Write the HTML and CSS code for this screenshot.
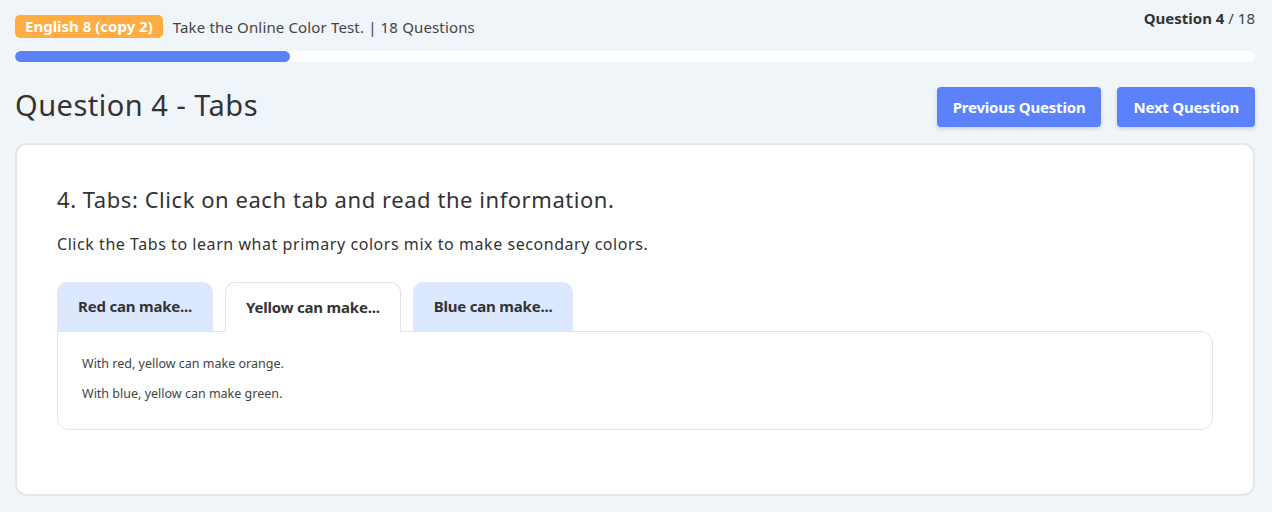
FILE: index.html
```html
<!DOCTYPE html>
<html lang="en">
<head>
  <meta charset="UTF-8" />
  <meta name="viewport" content="width=device-width, initial-scale=1.0" />
  <title>Question 4 - Tabs</title>
  <link rel="stylesheet" href="styles.css">
</head>
<body>
  <div class="page">

    <div class="top-bar">
      <div class="test-info">
        <span class="badge">English 8 (copy 2)</span>
        <span class="test-title">Take the Online Color Test. | 18 Questions</span>
      </div>
      <div class="counter"><b>Question 4</b> / 18</div>
    </div>

    <div class="progress">
      <div class="progress-fill" style="width: 22.2%;"></div>
    </div>

    <div class="question-head">
      <h1>Question 4 - Tabs</h1>
      <div class="nav-buttons">
        <button type="button">Previous Question</button>
        <button type="button">Next Question</button>
      </div>
    </div>

    <div class="card">
      <h2>4. Tabs: Click on each tab and read the information.</h2>
      <p class="intro">Click the Tabs to learn what primary colors mix to make secondary colors.</p>

      <ul class="tabs">
        <li>Red can make...</li>
        <li class="active">Yellow can make...</li>
        <li>Blue can make...</li>
      </ul>
      <div class="tab-panel">
        <p>With red, yellow can make orange.</p>
        <p>With blue, yellow can make green.</p>
      </div>
    </div>

  </div>
</body>
</html>
```

FILE: styles.css
```css
body {
  font-family: "Noto Sans", Lato, sans-serif;
  background: #f0f5fa;
  color: #333;
  margin: 0;
}
.page {
  padding: 12px 17px 16px 15px;
}
/* Top bar */
.top-bar {
  display: flex;
  justify-content: space-between;
  align-items: flex-start;
}
.test-info {
  display: flex;
  align-items: center;
  gap: 10px;
  margin-top: 3px;
}
.badge {
  background: #ffad42;
  color: #fff;
  font-weight: bold;
  font-size: 15px;
  padding: 1px 10px;
  border-radius: 5px;
  line-height: 21px;
}
.test-title {
  font-size: 15px;
  color: #444;
  letter-spacing: 0.15px;
}
.counter {
  font-size: 15px;
  color: #444;
  margin-top: -4px;
}
.counter b {
  color: #333;
}
/* Progress bar */
.progress {
  height: 11px;
  background: #fff;
  border-radius: 6px;
  margin-top: 13px;
  overflow: hidden;
}
.progress-fill {
  height: 100%;
  background: #5b82fb;
  border-radius: 6px;
}
/* Question header */
.question-head {
  display: flex;
  justify-content: space-between;
  align-items: center;
  margin-top: 25px;
}
h1 {
  margin: -5px 0 0;
  font-size: 29px;
  font-weight: normal;
  letter-spacing: 0.5px;
  color: #333;
}
.nav-buttons {
  display: flex;
  gap: 16px;
}
button {
  font-family: inherit;
  background: #5b82fb;
  color: #fff;
  border: none;
  border-radius: 4px;
  font-size: 15px;
  font-weight: bold;
  letter-spacing: -0.2px;
  height: 40px;
  padding: 0 16px;
  box-shadow: 0 2px 4px rgba(0,0,0,0.15);
  cursor: pointer;
}
button:hover {
  background: #4a70ea;
}
/* Card */
.card {
  background: #fff;
  border: 2px solid #e3e7ec;
  border-radius: 12px;
  margin-top: 16px;
  padding: 39px 40px 64px;
}
h2 {
  margin: 0;
  font-size: 22px;
  font-weight: normal;
  letter-spacing: 0.55px;
  color: #333;
}
.intro {
  margin: 19px 0 27px;
  font-size: 16px;
  letter-spacing: 0.55px;
  color: #333;
}
/* Tabs */
.tabs {
  display: flex;
  list-style: none;
  margin: 0;
  padding: 0;
  gap: 12px;
}
.tabs li {
  background: #dce8fd;
  border: 1px solid #dce8fd;
  border-bottom: none;
  border-radius: 10px 10px 0 0;
  padding: 13px 20px 15px;
  font-size: 15px;
  font-weight: bold;
  letter-spacing: -0.2px;
  color: #333;
  cursor: pointer;
}
.tabs li.active {
  background: #fff;
  border-color: #e3e3e3;
  margin-bottom: -1px;
  position: relative;
  padding-top: 14px;
  padding-bottom: 15px;
}
.tab-panel {
  border: 1px solid #e3e3e3;
  border-radius: 0 12px 12px 12px;
  padding: 23px 24px 26px;
}
.tab-panel p {
  margin: 0 0 12px;
  font-size: 12.5px;
  line-height: 18px;
  color: #444;
}
.tab-panel p:last-child {
  margin-bottom: 0;
}
```
